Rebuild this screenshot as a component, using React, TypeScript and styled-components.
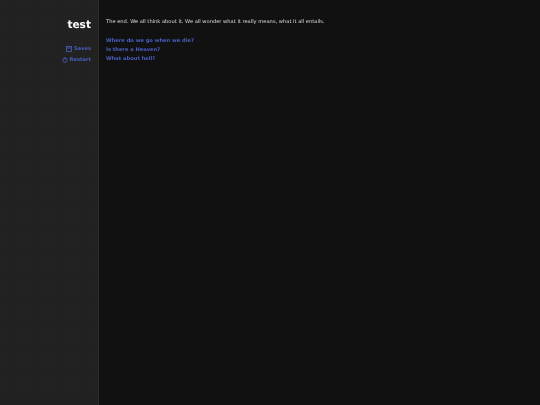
import styled, { createGlobalStyle } from "styled-components";

const GlobalStyle = createGlobalStyle`
  html, body {
    margin: 0;
    height: 100%;
    background: #111;
  }
  body {
    font-family: "DejaVu Sans", sans-serif;
    font-size: 5.15px;
    color: #ddd;
    text-rendering: geometricPrecision;
  }
`;

const dots = (tint: string) => `
  radial-gradient(${tint} 0.5px, transparent 0.8px) 0 0 / 3px 3px,
  radial-gradient(${tint} 0.5px, transparent 0.8px) 1.5px 1.5px / 3px 3px
`;

const Page = styled.div`
  display: flex;
  height: 405px;
`;

const Sidebar = styled.aside`
  width: 91px;
  padding: 19px 7px 0 0;
  background: ${dots("rgba(255, 255, 255, 0.03)")}, #202020;
  border-right: 1px solid #2c2c2c;
  display: flex;
  flex-direction: column;
  align-items: flex-end;
`;

const Title = styled.h1`
  margin: 0 0 11px;
  font-size: 10.6px;
  line-height: 13px;
  font-weight: bold;
  color: #fff;
  filter: blur(0.3px);
`;

const NavLink = styled.a`
  display: flex;
  align-items: center;
  gap: 2px;
  height: 11.5px;
  font-weight: bold;
  color: #4a5fc0;
  filter: blur(0.3px);
`;

const Main = styled.main`
  flex: 1;
  padding: 19px 0 0 7px;
  background: ${dots("rgba(255, 255, 255, 0.022)")}, #101010;
`;

const Intro = styled.p`
  margin: 0 0 11px;
  line-height: 7px;
  color: #ddd;
  filter: blur(0.3px);
`;

const Choice = styled.a`
  display: block;
  height: 9px;
  line-height: 9px;
  font-weight: bold;
  color: #4a5fc0;
  filter: blur(0.3px);
`;

const Icon = styled.svg`
  width: 6px;
  height: 6px;
  fill: none;
  stroke: currentColor;
  stroke-width: 0.8;
`;

export default function App() {
  return (
    <>
      <GlobalStyle />
      <Page>
        <Sidebar>
          <Title>test</Title>
          <NavLink>
            <Icon viewBox="0 0 6 6">
              <rect x="0.5" y="0.5" width="5" height="5" />
              <line x1="0.5" y1="2" x2="5.5" y2="2" />
            </Icon>
            Saves
          </NavLink>
          <NavLink>
            <Icon viewBox="0 0 6 6">
              <circle cx="3" cy="3.3" r="2.2" />
              <line x1="3" y1="0" x2="3" y2="2.5" />
            </Icon>
            Restart
          </NavLink>
        </Sidebar>
        <Main>
          <Intro>The end. We all think about it. We all wonder what it really means, what it all entails.</Intro>
          <Choice>Where do we go when we die?</Choice>
          <Choice>Is there a Heaven?</Choice>
          <Choice>What about hell?</Choice>
        </Main>
      </Page>
    </>
  );
}
